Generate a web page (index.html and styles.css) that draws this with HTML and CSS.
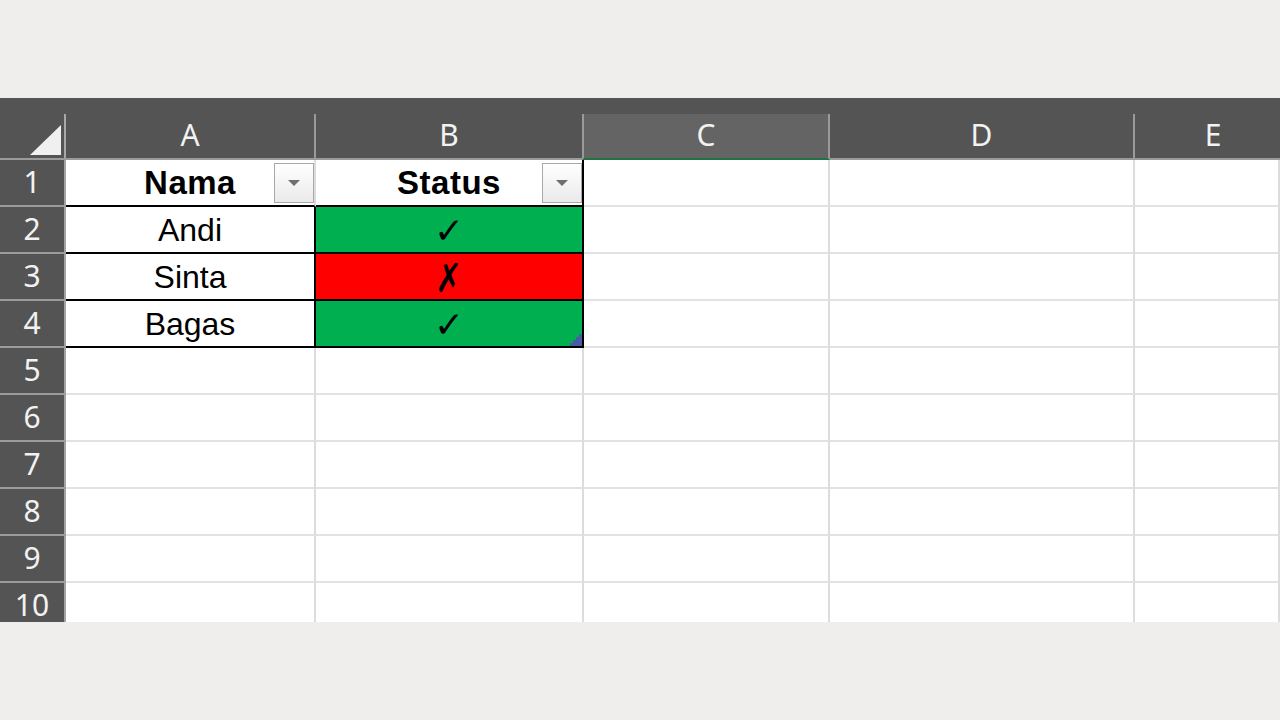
FILE: index.html
```html
<!DOCTYPE html>
<html>
<head>
<meta charset="utf-8">
<link rel="stylesheet" href="styles.css">
</head>
<body>
<div class="band-top"></div>
<div class="sheet">
  <div class="colhead corner"><div class="lbl lbl-corner"><svg class="tri" width="31" height="30" viewBox="0 0 31 30"><polygon points="31,0 31,30 0,30" fill="#f0f0f0"/></svg></div></div>
  <div class="colhead"><div class="lbl">A</div></div>
  <div class="colhead"><div class="lbl">B</div></div>
  <div class="colhead"><div class="lbl lbl-active">C</div></div>
  <div class="colhead"><div class="lbl">D</div></div>
  <div class="colhead"><div class="lbl lbl-last">E</div></div>

  <div class="rowhead">1</div>
  <div class="cell bold tb-bottom">Nama<span class="dd"><span class="dd-tri"></span></span></div>
  <div class="cell bold tb-bottom tb-right">Status<span class="dd"><span class="dd-tri"></span></span></div>
  <div class="cell"></div><div class="cell"></div><div class="cell"></div>

  <div class="rowhead">2</div>
  <div class="cell tb-bottom tb-right">Andi</div>
  <div class="cell tb-bottom tb-right ok"><span class="mark">✓</span></div>
  <div class="cell"></div><div class="cell"></div><div class="cell"></div>

  <div class="rowhead">3</div>
  <div class="cell tb-bottom tb-right">Sinta</div>
  <div class="cell tb-bottom tb-right bad"><span class="mark cross">✗</span></div>
  <div class="cell"></div><div class="cell"></div><div class="cell"></div>

  <div class="rowhead">4</div>
  <div class="cell tb-bottom tb-right">Bagas</div>
  <div class="cell tb-bottom tb-right ok handle-cell"><span class="mark">✓</span><svg class="handle" width="12" height="12" viewBox="0 0 12 12"><polygon points="12,0 12,12 0,12 0,9 3,9 3,6 6,6 6,3 9,3 9,0" fill="#4b5aa6"/></svg></div>
  <div class="cell"></div><div class="cell"></div><div class="cell"></div>

  <div class="rowhead">5</div>
  <div class="cell"></div><div class="cell"></div><div class="cell"></div><div class="cell"></div><div class="cell"></div>
  <div class="rowhead">6</div>
  <div class="cell"></div><div class="cell"></div><div class="cell"></div><div class="cell"></div><div class="cell"></div>
  <div class="rowhead">7</div>
  <div class="cell"></div><div class="cell"></div><div class="cell"></div><div class="cell"></div><div class="cell"></div>
  <div class="rowhead">8</div>
  <div class="cell"></div><div class="cell"></div><div class="cell"></div><div class="cell"></div><div class="cell"></div>
  <div class="rowhead">9</div>
  <div class="cell"></div><div class="cell"></div><div class="cell"></div><div class="cell"></div><div class="cell"></div>
  <div class="rowhead">10</div>
  <div class="cell"></div><div class="cell"></div><div class="cell"></div><div class="cell"></div><div class="cell"></div>
</div>
<div class="band-bottom"></div>
</body>
</html>
```
FILE: styles.css
```css
* { box-sizing: border-box; }
html, body { margin: 0; padding: 0; }
body {
  background: #efeeec;
  width: 1280px;
  height: 720px;
  overflow: hidden;
}
.band-top { height: 98px; }
.band-bottom { height: 98px; }
.sheet {
  display: grid;
  grid-template-columns: 66px 250px 268px 246px 305px 145px;
  grid-template-rows: 62px repeat(10, 47px);
  height: 524px;
  overflow: hidden;
  background: #ffffff;
}
.colhead {
  background: #545454;
  padding-top: 16px;
  border-bottom: 2px solid #9b9b9b;
  display: flex;
}
.lbl {
  flex: 1;
  display: flex;
  align-items: center;
  justify-content: center;
  border-right: 2px solid #9a9a9a;
  color: #f2f2f2;
  font-family: "Noto Sans", "Open Sans", sans-serif;
  font-size: 30px;
  line-height: 1;
  padding-bottom: 2px;
}
.lbl-last { border-right: none; padding-left: 11px; }
.lbl-active {
  background: #646464;
  border-left: 2px solid #9a9a9a;
  margin-left: -2px;
  margin-bottom: -2px;
  border-bottom: 2px solid #217346;
}
.lbl-corner {
  align-items: flex-end;
  justify-content: flex-end;
  padding: 0 3px 3px 0;
  border-right-color: #a8a8a8;
}
.tri { display: block; }
.rowhead {
  background: #545454;
  color: #f2f2f2;
  font-family: "Noto Sans", "Open Sans", sans-serif;
  font-size: 30px;
  line-height: 1;
  display: flex;
  align-items: center;
  justify-content: center;
  border-right: 2px solid #a3a3a3;
  border-bottom: 2px solid #9c9c9c;
  padding-bottom: 1px;
}
.cell {
  position: relative;
  border-right: 2px solid #dcdcdc;
  border-bottom: 2px solid #e2e2e2;
  display: flex;
  align-items: center;
  justify-content: center;
  font-family: "Liberation Sans", Arial, sans-serif;
  font-size: 32px;
  color: #000;
  line-height: 1;
}
.bold { font-weight: bold; font-size: 33px; letter-spacing: 0.5px; }
.tb-bottom { border-bottom-color: #000; }
.tb-right { border-right-color: #000; }
.ok { background: #00b050; }
.bad { background: #ff0000; }
.mark {
  font-family: "DejaVu Sans", sans-serif;
  font-size: 36px;
  font-weight: normal;
  color: #000;
  display: inline-block;
  padding-top: 2px;
}
.cross { font-size: 40px; transform: scaleX(0.8); padding-top: 3px; }
.dd {
  position: absolute;
  right: 0;
  top: 3px;
  width: 40px;
  height: 40px;
  border: 1px solid #a9a9a9;
  background: linear-gradient(#ffffff, #eaeaea);
  display: flex;
  align-items: center;
  justify-content: center;
}
.dd-tri {
  width: 0;
  height: 0;
  border-left: 6px solid transparent;
  border-right: 6px solid transparent;
  border-top: 6px solid #6f6f6f;
}
.handle {
  position: absolute;
  right: 0;
  bottom: 0;
  display: block;
}
```
